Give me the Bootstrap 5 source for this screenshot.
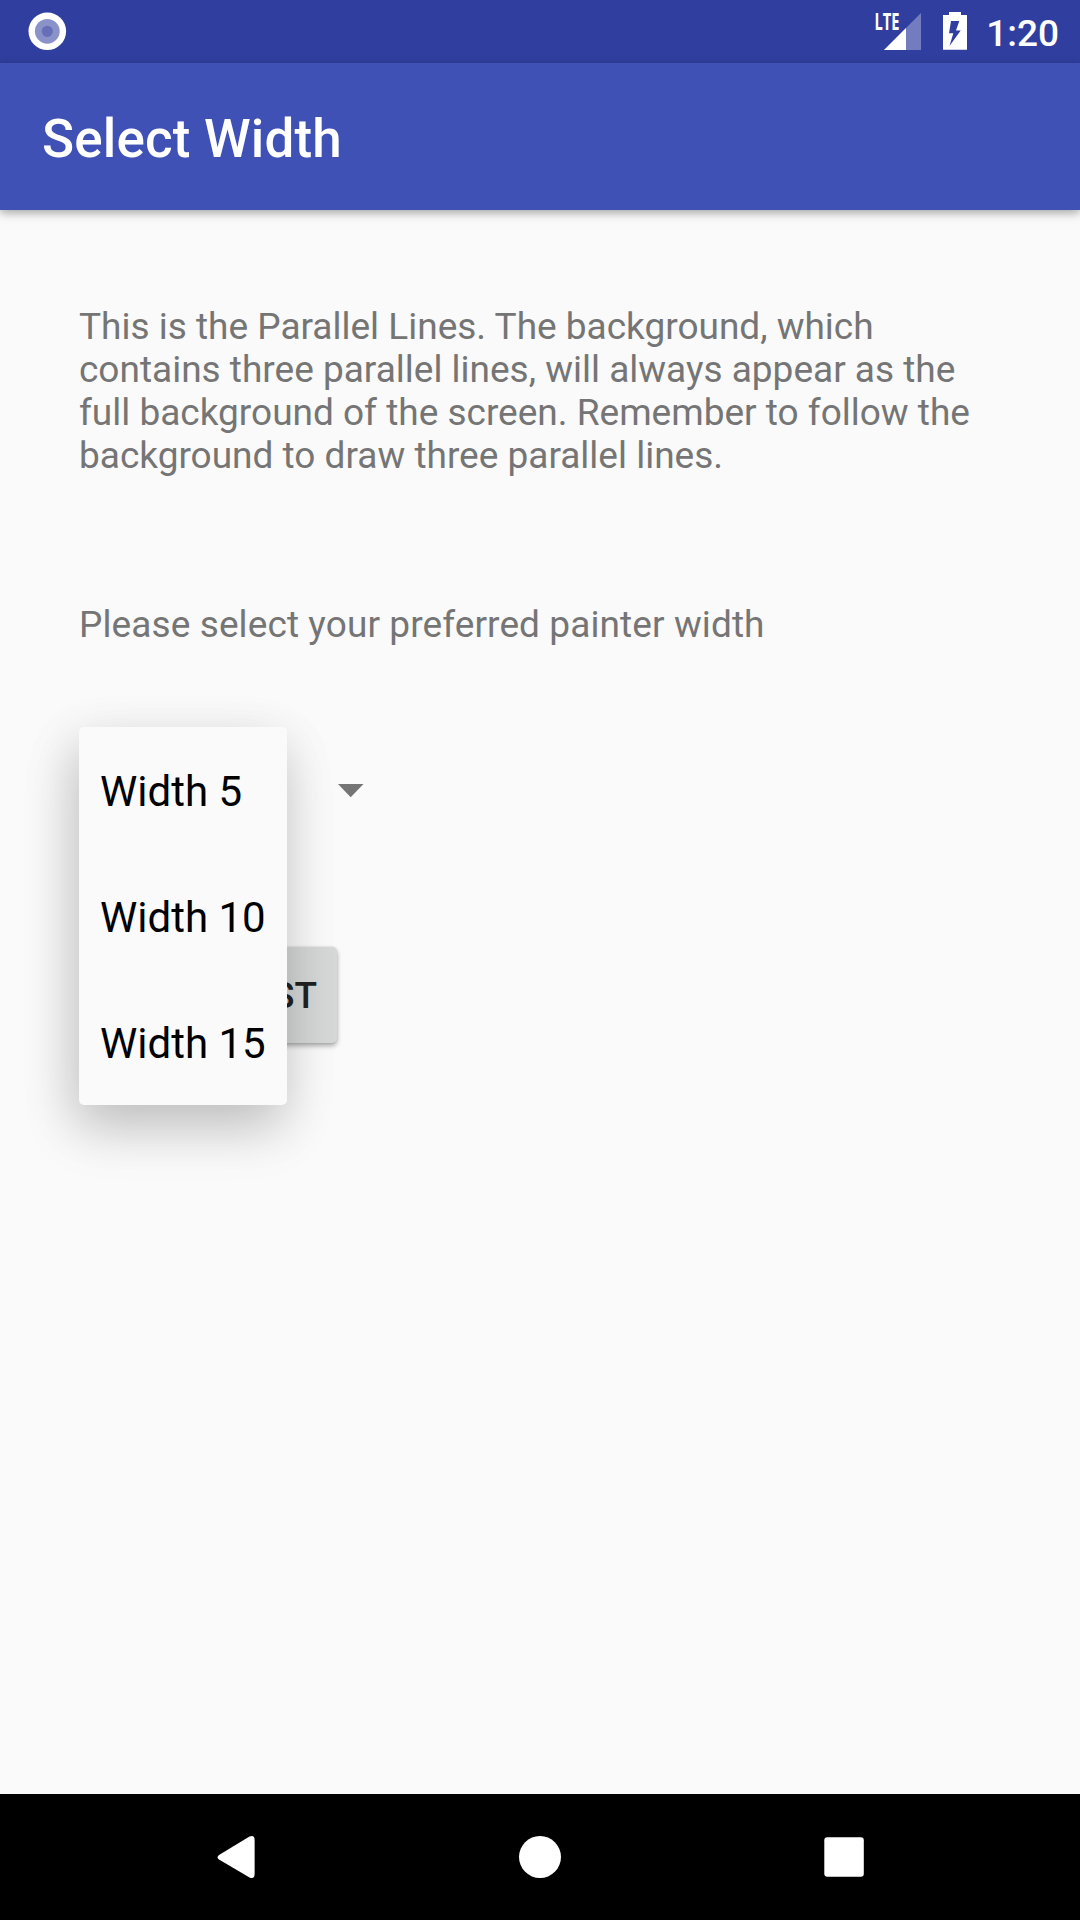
<!DOCTYPE html>
<html lang="en">
<head>
<meta charset="utf-8">
<title>Select Width</title>
<link href="https://cdn.jsdelivr.net/npm/bootstrap@5.3.0/dist/css/bootstrap.min.css" rel="stylesheet">
<style>
body{font-family:Roboto,"Liberation Sans",sans-serif;background:#fafafa;width:1080px;height:1920px;overflow:hidden}
.statusbar{height:63px;background:#303f9f}
.clock{font-size:37px;line-height:43px;font-weight:500;padding:3px 21px 0 0}
.appbar{height:147px;background:#3f51b5;padding:5px 42px 0;box-shadow:0 3px 9px rgba(0,0,0,.34)}
.appbar .navbar-brand{font-size:53px;line-height:62px;font-weight:500;letter-spacing:.15px}
.screen{padding:95px 79px 0}
.copy{font-size:37px;line-height:43px;color:#757575}
.prompt{letter-spacing:.1px}
.intro{margin-bottom:126px;white-space:nowrap}
.picker{margin-top:81px;height:126px;padding:57px 0 0 259px}
.btn-go{width:247px;height:96px;margin:94px 0 0 11px;background:#d6d7d7;border:0;border-radius:5px;font-size:37px;font-weight:500;color:#212121;line-height:43px;padding:1px 20px 0;box-shadow:0 3px 5px rgba(0,0,0,.3),0 0 3px rgba(0,0,0,.12)}
.width-menu{top:0;left:0;width:208px;min-width:0;padding:0;border:0;border-radius:5px;background:#fafafa;box-shadow:-4px 24px 54px rgba(0,0,0,.15),-4px 16px 54px rgba(0,0,0,.12)}
.width-menu .dropdown-item{height:126px;padding:3px 0 0 21px;font-size:42px;line-height:50px;color:#000}
.softkeys{height:126px;background:#000}
</style>
</head>
<body class="d-flex flex-column">
<header class="statusbar d-flex flex-shrink-0 justify-content-between text-white">
  <svg width="80" height="63"><circle cx="47.3" cy="31.3" r="18.8" fill="#fff"/><circle cx="47.3" cy="31.3" r="12.4" fill="#8a92ca"/><circle cx="47.3" cy="31.3" r="5.6" fill="#666fb8"/></svg>
  <div class="d-flex align-items-center">
    <svg width="117" height="63" viewBox="869 0 117 63">
      <text x="874.500" y="29.800" font-family="Open Sans" font-size="22.5" font-weight="700" fill="#fff" textLength="25" lengthAdjust="spacingAndGlyphs">LTE</text>
      <path d="M921 13V50H884Z" fill="#fff" fill-opacity=".32"/><path d="M906 28V50H884Z" fill="#fff"/>
      <path fill="#fff" fill-rule="evenodd" d="M949 12h12v3h6v34.7h-24V15h6zM951 21L949 33.300H953.300L949.500 46L960.700 30.500H956L959.300 21Z"/>
    </svg>
    <div class="clock">1:20</div>
  </div>
</header>
<nav class="navbar appbar flex-shrink-0"><span class="navbar-brand text-white p-0 m-0">Select Width</span></nav>
<main class="screen flex-grow-1">
  <p class="copy intro">This is the Parallel Lines. The background, which<br>contains three parallel lines, will always appear as the<br>full background of the screen. Remember to follow the<br>background to draw three parallel lines.</p>
  <p class="copy prompt mb-0">Please select your preferred painter width</p>
  <div class="picker dropdown">
    <svg class="d-block" width="26" height="14"><path d="M0 0H25.5L12.7 13.2Z" fill="#757575"/></svg>
    <div class="dropdown-menu show width-menu">
      <a class="dropdown-item d-flex align-items-center">Width 5</a>
      <a class="dropdown-item d-flex align-items-center">Width 10</a>
      <a class="dropdown-item d-flex align-items-center">Width 15</a>
    </div>
  </div>
  <button class="btn btn-go text-end">ST</button>
</main>
<footer class="softkeys d-flex flex-shrink-0 justify-content-center">
  <svg width="1080" height="126" viewBox="0 1794 1080 126" fill="#fff">
    <path d="M219 1855L249.500 1836.500Q254.600 1834.500 254.600 1840V1874Q254.600 1879.500 249.500 1877.500L219 1859.500Q216 1857.300 219 1855Z"/>
    <circle cx="540" cy="1857" r="21"/>
    <rect x="824.300" y="1837.300" width="39.500" height="39.500" rx="3"/>
  </svg>
</footer>
<script src="https://cdn.jsdelivr.net/npm/bootstrap@5.3.0/dist/js/bootstrap.bundle.min.js"></script>
</body>
</html>
